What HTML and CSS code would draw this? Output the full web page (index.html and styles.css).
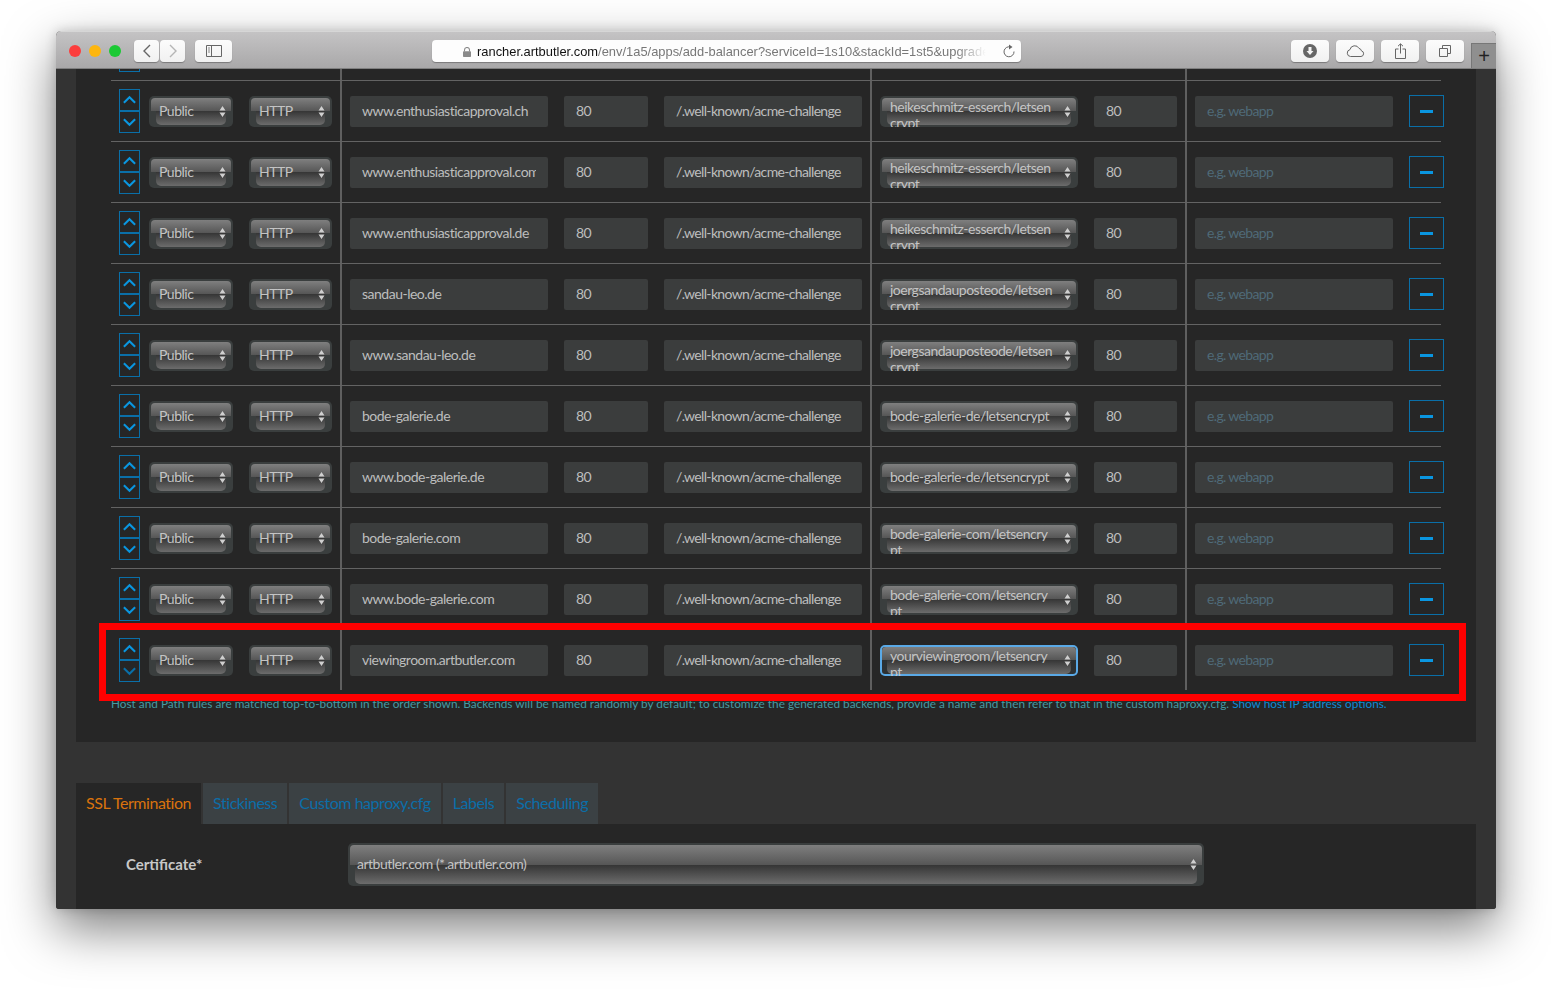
FILE: index.html
```html
<!DOCTYPE html>
<html lang="en">
<head>
    <meta charset="UTF-8">
    <title>Add Balancer</title>
    <link rel="stylesheet" href="styles.css">
</head>
<body>
    <svg class="defs" width="0" height="0">
        <symbol id="i-up" viewBox="0 0 16 10"><path d="M2 8 L8 2 L14 8" fill="none" stroke="currentColor" stroke-width="2.2"/></symbol>
        <symbol id="i-down" viewBox="0 0 16 10"><path d="M2 2 L8 8 L14 2" fill="none" stroke="currentColor" stroke-width="2.2"/></symbol>
        <symbol id="i-sort" viewBox="0 0 7 11"><path d="M3.5 0 L6.5 4.4 H0.5 Z M3.5 11 L0.5 6.6 H6.5 Z" fill="currentColor"/></symbol>
    </svg>

    <div class="window">
        <header class="toolbar">
            <div class="lights">
                <span class="light red"></span>
                <span class="light yellow"></span>
                <span class="light green"></span>
            </div>
            <div class="nav-group">
                <button class="tb-btn nav-btn"><svg width="10" height="16" viewBox="0 0 10 16"><path d="M8 2 L2 8 L8 14" fill="none" stroke="#666" stroke-width="1.4"/></svg></button>
                <button class="tb-btn nav-btn"><svg width="10" height="16" viewBox="0 0 10 16"><path d="M2 2 L8 8 L2 14" fill="none" stroke="#b5b5b5" stroke-width="1.4"/></svg></button>
            </div>
            <button class="tb-btn side-btn"><svg width="16" height="12" viewBox="0 0 16 12"><path d="M0.5 0.5 H15.5 V11.5 H0.5 Z M5.5 0.5 V11.5" fill="none" stroke="#666"/><path d="M2 3 H4 M2 5 H4 M2 7 H4" stroke="#888"/></svg></button>
            <div class="urlbar">
                <svg class="lock" width="8" height="10" viewBox="0 0 8 10"><path d="M1.5 4.5 V3 a2.5 2.5 0 0 1 5 0 V4.5" fill="none" stroke="#8a8a8a" stroke-width="1.1"/><rect x="0" y="4.2" width="8" height="5.8" rx="0.8" fill="#8a8a8a"/></svg>
                <span class="url"><b>rancher.artbutler.com</b>/env/1a5/apps/add-balancer?serviceId=1s10&amp;stackId=1st5&amp;upgrade</span>
                <svg class="reload" width="14" height="15" viewBox="0 0 14 15"><path d="M8.5 3 A5 5 0 1 0 12 7.5" fill="none" stroke="#666" stroke-width="1"/><path d="M7 0.5 L10.5 3 L7 5.5 Z" fill="#666"/></svg>
            </div>
            <div class="tb-right">
                <button class="tb-btn"><svg width="14" height="14" viewBox="0 0 14 14"><circle cx="7" cy="7" r="7" fill="#666"/><path d="M5.5 3 H8.5 V7 H10.5 L7 11 L3.5 7 H5.5 Z" fill="#f4f4f4"/></svg></button>
                <button class="tb-btn"><svg width="19" height="12" viewBox="0 0 19 12"><path d="M4.5 11.5 a3.5 3.5 0 0 1 -0.5 -6.9 a4.8 4.8 0 0 1 9 -1.2 a3 3 0 0 1 2.4 2.4 a2.9 2.9 0 0 1 -0.4 5.7 Z" fill="none" stroke="#666"/></svg></button>
                <button class="tb-btn"><svg width="11" height="16" viewBox="0 0 11 16"><path d="M3.5 6 H0.5 V15.5 H10.5 V6 H7.5 M5.5 10.5 V1 M3 3.2 L5.5 0.8 L8 3.2" fill="none" stroke="#666"/></svg></button>
                <button class="tb-btn"><svg width="12" height="12" viewBox="0 0 12 12"><path d="M3.5 3 V0.5 H11.5 V8.5 H8.5 M0.5 3.5 H8.5 V11.5 H0.5 Z" fill="none" stroke="#666"/></svg></button>
            </div>
            <div class="new-tab">+</div>
        </header>

        <main class="page">
            <section class="rules-panel">
                <div class="rules">
                    <div class="row">
                        <div class="cell cell-a">
                            <div class="updown"><button class="arrow"><svg><use href="#i-up"/></svg></button><button class="arrow"><svg><use href="#i-down"/></svg></button></div>
                            <div class="sel sel-access"><span>Public</span><svg class="sort"><use href="#i-sort"/></svg></div>
                            <div class="sel sel-proto"><span>HTTP</span><svg class="sort"><use href="#i-sort"/></svg></div>
                        </div>
                        <div class="cell cell-b">
                            <input class="field field-wide" value="enthusiasticapproval.ch">
                            <input class="field field-port" value="80">
                            <input class="field field-wide" value="/.well-known/acme-challenge">
                        </div>
                        <div class="cell cell-c">
                            <div class="sel sel-target two-line"><span>heikeschmitz-esserch/letsencrypt</span><svg class="sort"><use href="#i-sort"/></svg></div>
                            <input class="field field-port narrow" value="80">
                        </div>
                        <div class="cell cell-d">
                            <input class="field field-wide" placeholder="e.g. webapp">
                            <button class="remove"></button>
                        </div>
                    </div>

                    <div class="row">
                        <div class="cell cell-a">
                            <div class="updown"><button class="arrow"><svg><use href="#i-up"/></svg></button><button class="arrow"><svg><use href="#i-down"/></svg></button></div>
                            <div class="sel sel-access"><span>Public</span><svg class="sort"><use href="#i-sort"/></svg></div>
                            <div class="sel sel-proto"><span>HTTP</span><svg class="sort"><use href="#i-sort"/></svg></div>
                        </div>
                        <div class="cell cell-b">
                            <input class="field field-wide" value="www.enthusiasticapproval.ch">
                            <input class="field field-port" value="80">
                            <input class="field field-wide" value="/.well-known/acme-challenge">
                        </div>
                        <div class="cell cell-c">
                            <div class="sel sel-target two-line"><span>heikeschmitz-esserch/letsencrypt</span><svg class="sort"><use href="#i-sort"/></svg></div>
                            <input class="field field-port narrow" value="80">
                        </div>
                        <div class="cell cell-d">
                            <input class="field field-wide" placeholder="e.g. webapp">
                            <button class="remove"></button>
                        </div>
                    </div>

                    <div class="row">
                        <div class="cell cell-a">
                            <div class="updown"><button class="arrow"><svg><use href="#i-up"/></svg></button><button class="arrow"><svg><use href="#i-down"/></svg></button></div>
                            <div class="sel sel-access"><span>Public</span><svg class="sort"><use href="#i-sort"/></svg></div>
                            <div class="sel sel-proto"><span>HTTP</span><svg class="sort"><use href="#i-sort"/></svg></div>
                        </div>
                        <div class="cell cell-b">
                            <input class="field field-wide" value="www.enthusiasticapproval.com">
                            <input class="field field-port" value="80">
                            <input class="field field-wide" value="/.well-known/acme-challenge">
                        </div>
                        <div class="cell cell-c">
                            <div class="sel sel-target two-line"><span>heikeschmitz-esserch/letsencrypt</span><svg class="sort"><use href="#i-sort"/></svg></div>
                            <input class="field field-port narrow" value="80">
                        </div>
                        <div class="cell cell-d">
                            <input class="field field-wide" placeholder="e.g. webapp">
                            <button class="remove"></button>
                        </div>
                    </div>

                    <div class="row">
                        <div class="cell cell-a">
                            <div class="updown"><button class="arrow"><svg><use href="#i-up"/></svg></button><button class="arrow"><svg><use href="#i-down"/></svg></button></div>
                            <div class="sel sel-access"><span>Public</span><svg class="sort"><use href="#i-sort"/></svg></div>
                            <div class="sel sel-proto"><span>HTTP</span><svg class="sort"><use href="#i-sort"/></svg></div>
                        </div>
                        <div class="cell cell-b">
                            <input class="field field-wide" value="www.enthusiasticapproval.de">
                            <input class="field field-port" value="80">
                            <input class="field field-wide" value="/.well-known/acme-challenge">
                        </div>
                        <div class="cell cell-c">
                            <div class="sel sel-target two-line"><span>heikeschmitz-esserch/letsencrypt</span><svg class="sort"><use href="#i-sort"/></svg></div>
                            <input class="field field-port narrow" value="80">
                        </div>
                        <div class="cell cell-d">
                            <input class="field field-wide" placeholder="e.g. webapp">
                            <button class="remove"></button>
                        </div>
                    </div>

                    <div class="row">
                        <div class="cell cell-a">
                            <div class="updown"><button class="arrow"><svg><use href="#i-up"/></svg></button><button class="arrow"><svg><use href="#i-down"/></svg></button></div>
                            <div class="sel sel-access"><span>Public</span><svg class="sort"><use href="#i-sort"/></svg></div>
                            <div class="sel sel-proto"><span>HTTP</span><svg class="sort"><use href="#i-sort"/></svg></div>
                        </div>
                        <div class="cell cell-b">
                            <input class="field field-wide" value="sandau-leo.de">
                            <input class="field field-port" value="80">
                            <input class="field field-wide" value="/.well-known/acme-challenge">
                        </div>
                        <div class="cell cell-c">
                            <div class="sel sel-target two-line"><span>joergsandauposteode/letsencrypt</span><svg class="sort"><use href="#i-sort"/></svg></div>
                            <input class="field field-port narrow" value="80">
                        </div>
                        <div class="cell cell-d">
                            <input class="field field-wide" placeholder="e.g. webapp">
                            <button class="remove"></button>
                        </div>
                    </div>

                    <div class="row">
                        <div class="cell cell-a">
                            <div class="updown"><button class="arrow"><svg><use href="#i-up"/></svg></button><button class="arrow"><svg><use href="#i-down"/></svg></button></div>
                            <div class="sel sel-access"><span>Public</span><svg class="sort"><use href="#i-sort"/></svg></div>
                            <div class="sel sel-proto"><span>HTTP</span><svg class="sort"><use href="#i-sort"/></svg></div>
                        </div>
                        <div class="cell cell-b">
                            <input class="field field-wide" value="www.sandau-leo.de">
                            <input class="field field-port" value="80">
                            <input class="field field-wide" value="/.well-known/acme-challenge">
                        </div>
                        <div class="cell cell-c">
                            <div class="sel sel-target two-line"><span>joergsandauposteode/letsencrypt</span><svg class="sort"><use href="#i-sort"/></svg></div>
                            <input class="field field-port narrow" value="80">
                        </div>
                        <div class="cell cell-d">
                            <input class="field field-wide" placeholder="e.g. webapp">
                            <button class="remove"></button>
                        </div>
                    </div>

                    <div class="row">
                        <div class="cell cell-a">
                            <div class="updown"><button class="arrow"><svg><use href="#i-up"/></svg></button><button class="arrow"><svg><use href="#i-down"/></svg></button></div>
                            <div class="sel sel-access"><span>Public</span><svg class="sort"><use href="#i-sort"/></svg></div>
                            <div class="sel sel-proto"><span>HTTP</span><svg class="sort"><use href="#i-sort"/></svg></div>
                        </div>
                        <div class="cell cell-b">
                            <input class="field field-wide" value="bode-galerie.de">
                            <input class="field field-port" value="80">
                            <input class="field field-wide" value="/.well-known/acme-challenge">
                        </div>
                        <div class="cell cell-c">
                            <div class="sel sel-target"><span>bode-galerie-de/letsencrypt</span><svg class="sort"><use href="#i-sort"/></svg></div>
                            <input class="field field-port narrow" value="80">
                        </div>
                        <div class="cell cell-d">
                            <input class="field field-wide" placeholder="e.g. webapp">
                            <button class="remove"></button>
                        </div>
                    </div>

                    <div class="row">
                        <div class="cell cell-a">
                            <div class="updown"><button class="arrow"><svg><use href="#i-up"/></svg></button><button class="arrow"><svg><use href="#i-down"/></svg></button></div>
                            <div class="sel sel-access"><span>Public</span><svg class="sort"><use href="#i-sort"/></svg></div>
                            <div class="sel sel-proto"><span>HTTP</span><svg class="sort"><use href="#i-sort"/></svg></div>
                        </div>
                        <div class="cell cell-b">
                            <input class="field field-wide" value="www.bode-galerie.de">
                            <input class="field field-port" value="80">
                            <input class="field field-wide" value="/.well-known/acme-challenge">
                        </div>
                        <div class="cell cell-c">
                            <div class="sel sel-target"><span>bode-galerie-de/letsencrypt</span><svg class="sort"><use href="#i-sort"/></svg></div>
                            <input class="field field-port narrow" value="80">
                        </div>
                        <div class="cell cell-d">
                            <input class="field field-wide" placeholder="e.g. webapp">
                            <button class="remove"></button>
                        </div>
                    </div>

                    <div class="row">
                        <div class="cell cell-a">
                            <div class="updown"><button class="arrow"><svg><use href="#i-up"/></svg></button><button class="arrow"><svg><use href="#i-down"/></svg></button></div>
                            <div class="sel sel-access"><span>Public</span><svg class="sort"><use href="#i-sort"/></svg></div>
                            <div class="sel sel-proto"><span>HTTP</span><svg class="sort"><use href="#i-sort"/></svg></div>
                        </div>
                        <div class="cell cell-b">
                            <input class="field field-wide" value="bode-galerie.com">
                            <input class="field field-port" value="80">
                            <input class="field field-wide" value="/.well-known/acme-challenge">
                        </div>
                        <div class="cell cell-c">
                            <div class="sel sel-target two-line"><span>bode-galerie-com/letsencrypt</span><svg class="sort"><use href="#i-sort"/></svg></div>
                            <input class="field field-port narrow" value="80">
                        </div>
                        <div class="cell cell-d">
                            <input class="field field-wide" placeholder="e.g. webapp">
                            <button class="remove"></button>
                        </div>
                    </div>

                    <div class="row">
                        <div class="cell cell-a">
                            <div class="updown"><button class="arrow"><svg><use href="#i-up"/></svg></button><button class="arrow"><svg><use href="#i-down"/></svg></button></div>
                            <div class="sel sel-access"><span>Public</span><svg class="sort"><use href="#i-sort"/></svg></div>
                            <div class="sel sel-proto"><span>HTTP</span><svg class="sort"><use href="#i-sort"/></svg></div>
                        </div>
                        <div class="cell cell-b">
                            <input class="field field-wide" value="www.bode-galerie.com">
                            <input class="field field-port" value="80">
                            <input class="field field-wide" value="/.well-known/acme-challenge">
                        </div>
                        <div class="cell cell-c">
                            <div class="sel sel-target two-line"><span>bode-galerie-com/letsencrypt</span><svg class="sort"><use href="#i-sort"/></svg></div>
                            <input class="field field-port narrow" value="80">
                        </div>
                        <div class="cell cell-d">
                            <input class="field field-wide" placeholder="e.g. webapp">
                            <button class="remove"></button>
                        </div>
                    </div>

                    <div class="row">
                        <div class="cell cell-a">
                            <div class="updown"><button class="arrow"><svg><use href="#i-up"/></svg></button><button class="arrow dim"><svg><use href="#i-down"/></svg></button></div>
                            <div class="sel sel-access"><span>Public</span><svg class="sort"><use href="#i-sort"/></svg></div>
                            <div class="sel sel-proto"><span>HTTP</span><svg class="sort"><use href="#i-sort"/></svg></div>
                        </div>
                        <div class="cell cell-b">
                            <input class="field field-wide" value="viewingroom.artbutler.com">
                            <input class="field field-port" value="80">
                            <input class="field field-wide" value="/.well-known/acme-challenge">
                        </div>
                        <div class="cell cell-c">
                            <div class="sel sel-target two-line focused"><span>yourviewingroom/letsencrypt</span><svg class="sort"><use href="#i-sort"/></svg></div>
                            <input class="field field-port narrow" value="80">
                        </div>
                        <div class="cell cell-d">
                            <input class="field field-wide" placeholder="e.g. webapp">
                            <button class="remove"></button>
                        </div>
                    </div>
                </div>

                <p class="help">Host and Path rules are matched top-to-bottom in the order shown. Backends will be named randomly by default; to customize the generated backends, provide a name and then refer to that in the custom haproxy.cfg. <a href="#">Show host IP address options.</a></p>
            </section>

            <nav class="tabs">
                <a class="tab active" href="#">SSL Termination</a>
                <a class="tab" href="#">Stickiness</a>
                <a class="tab" href="#">Custom haproxy.cfg</a>
                <a class="tab" href="#">Labels</a>
                <a class="tab" href="#">Scheduling</a>
            </nav>
            <section class="tab-panel">
                <label class="cert-label">Certificate*</label>
                <div class="sel sel-cert"><span>artbutler.com (*.artbutler.com)</span><svg class="sort"><use href="#i-sort"/></svg></div>
            </section>
        </main>

        <div class="highlight"></div>
    </div>
</body>
</html>
```

FILE: styles.css
```css
* {
    box-sizing: border-box;
}

html, body {
    height: 100%;
}

body {
    margin: 0;
    padding: 31px 56px 0;
    background: #fff;
    overflow: hidden;
    font-family: 'Lato', sans-serif;
    color: #bdbdbd;
}

body::before {
    content: "";
    position: absolute;
    left: 56px;
    top: 31px;
    width: 1440px;
    height: 878px;
    border-radius: 5px;
    box-shadow: 0 20px 50px rgba(0, 0, 0, 0.5), 0 0 12px rgba(0, 0, 0, 0.18);
}

.defs {
    display: block;
    height: 0;
}

.window {
    position: relative;
    height: 878px;
    width: 1440px;
    border-radius: 5px 5px 3px 3px;
    overflow: hidden;
    background: #333;
}

/* browser chrome */
.toolbar {
    display: flex;
    align-items: center;
    height: 38px;
    padding-top: 2px;
    background: linear-gradient(#c4c3c4, #a9a8a9);
    border-bottom: 1px solid #7f7f7f;
    border-top: 1px solid #d6d6d6;
}

.lights {
    display: flex;
    gap: 8px;
    margin-left: 13px;
    width: 65px;
}

.light {
    width: 12px;
    height: 12px;
    border-radius: 50%;
}

.light.red { background: #fc3d3d; }
.light.yellow { background: #fdb60f; }
.light.green { background: #1bc934; }

.tb-btn {
    display: flex;
    align-items: center;
    justify-content: center;
    width: 38px;
    height: 22px;
    padding: 0;
    background: linear-gradient(#fcfcfc, #f1f1f1);
    border: none;
    border-radius: 4px;
    box-shadow: 0 1px 1px rgba(0, 0, 0, 0.3);
}

.nav-group {
    display: flex;
    gap: 1px;
}

.nav-btn {
    width: 25px;
}

.side-btn {
    margin-left: 10px;
    width: 37px;
}

.urlbar {
    display: flex;
    align-items: center;
    width: 589px;
    height: 22px;
    margin-left: 200px;
    padding: 1px 0 0 31px;
    background: #fdfdfd;
    border-radius: 4px;
    box-shadow: 0 1px 1px rgba(0, 0, 0, 0.3);
    font-family: 'Liberation Sans', sans-serif;
    font-size: 12.9px;
    color: #777;
    white-space: nowrap;
}

.lock {
    flex: none;
    margin-right: 6px;
}

.url {
    width: 509px;
    overflow: hidden;
    -webkit-mask-image: linear-gradient(to right, #000 94%, transparent);
    mask-image: linear-gradient(to right, #000 94%, transparent);
}

.url b {
    font-weight: 400;
    color: #111;
}

.reload {
    flex: none;
    margin-left: 16px;
}

.tb-right {
    display: flex;
    gap: 7px;
    margin-left: 270px;
}

.new-tab {
    width: 25px;
    height: 25px;
    margin-left: 7px;
    align-self: flex-end;
    background: #8f8f8f;
    border-left: 1px solid #777;
    border-top: 1px solid #777;
    color: #222;
    font-family: 'Liberation Sans', sans-serif;
    font-size: 20px;
    font-weight: 300;
    line-height: 25px;
    text-align: center;
}

/* page */
.page {
    height: 840px;
    padding: 0 20px;
    background: #333;
    overflow: hidden;
}

.rules-panel {
    height: 673px;
    padding-left: 35px;
    background: #262626;
    overflow: hidden;
}

.rules {
    margin-top: -50px;
}

.row {
    display: flex;
    width: 1330px;
    height: 61px;
    border-top: 1px solid #636363;
}

.cell {
    display: flex;
    flex: none;
    align-items: center;
    gap: 16px;
    padding-left: 8px;
    border-left: 2px solid #5f5f5f;
}

.cell-a {
    width: 229px;
    border-left: none;
}

.cell-b { width: 530px; }
.cell-c { width: 315px; }
.cell-d { width: 256px; }

.updown {
    display: flex;
    flex: none;
    flex-direction: column;
    width: 21px;
    margin-right: -7px;
}

.arrow {
    display: flex;
    align-items: center;
    justify-content: center;
    width: 21px;
    height: 22px;
    padding: 0;
    background: none;
    border: 1px solid #0a6fa8;
    color: #0a96e0;
}

.arrow svg {
    width: 15px;
    height: 10px;
}

.arrow.dim {
    color: #0a6fa8;
}

.field {
    height: 31px;
    padding: 0 12px 2px;
    background: #3b3d3d;
    border: none;
    border-radius: 2px;
    outline: none;
    color: #bdbdbd;
    font-family: 'Lato', sans-serif;
    font-size: 14px;
    letter-spacing: -0.5px;
}

.cell-b .field-wide:last-child {
    letter-spacing: -0.65px;
}

.field::placeholder {
    color: #4f6a78;
    letter-spacing: -0.65px;
    opacity: 1;
}

.field-wide { width: 198px; }
.field-port { width: 84px; }
.field-port.narrow { width: 83px; }

.remove {
    position: relative;
    flex: none;
    width: 35px;
    height: 32px;
    padding: 0;
    background: none;
    border: 1px solid #0a6fa8;
}

.remove::after {
    content: "";
    position: absolute;
    left: 10px;
    top: 14px;
    width: 13px;
    height: 3px;
    background: #0a96e0;
}

/* glossy native selects */
.sel {
    position: relative;
    display: flex;
    flex: none;
    align-items: center;
    height: 31px;
    padding: 0 24px 1px 10px;
    background: #3a3e3e;
    border-radius: 5px;
    overflow: hidden;
    color: #c4c4c4;
    font-size: 14px;
    line-height: 16px;
    letter-spacing: -0.5px;
}

.sel::before {
    content: "";
    position: absolute;
    left: 2px;
    right: 2px;
    top: 2px;
    height: 13px;
    background: linear-gradient(#7f7f7f, #565656);
    border-radius: 4px 4px 0 0;
}

.sel::after {
    content: "";
    position: absolute;
    left: 7px;
    right: 7px;
    top: 15px;
    bottom: 2px;
    background: linear-gradient(#353535, #6c6c6c);
    border-radius: 0 0 5px 5px;
}

.sel span {
    position: relative;
    z-index: 1;
    word-break: break-all;
}

.sort {
    position: absolute;
    z-index: 1;
    right: 7px;
    top: 10px;
    width: 7px;
    height: 11px;
    color: #cfcfcf;
}

.sel-access { width: 84px; }
.sel-proto { width: 83px; }
.sel-target { width: 198px; }

.two-line {
    align-items: flex-start;
    padding-top: 3px;
}

.focused {
    background: #2d3133;
    box-shadow: inset 0 0 0 2px #5aa9e6;
}

.help {
    margin: 5px 0 0;
    font-size: 11.8px;
    line-height: 17px;
    color: #459aa3;
    white-space: nowrap;
}

.help a {
    color: #0d8ad6;
    text-decoration: none;
}

/* tabs */
.tabs {
    display: flex;
    gap: 2px;
    margin-top: 41px;
}

.tab {
    height: 41px;
    padding: 0 10px;
    background: #3b4144;
    color: #0b6ea8;
    font-size: 16px;
    letter-spacing: -0.45px;
    line-height: 39px;
    text-decoration: none;
}

.tab.active {
    background: #262626;
    color: #d9730d;
}

.tab-panel {
    display: flex;
    align-items: flex-start;
    height: 90px;
    padding: 19px 0 0 50px;
    background: #262626;
}

.cert-label {
    width: 222px;
    padding-top: 12px;
    font-size: 15px;
    font-weight: 700;
    color: #c8c8c8;
}

.sel-cert {
    width: 856px;
    height: 43px;
    padding-left: 9px;
}

.sel-cert::before {
    height: 20px;
}

.sel-cert::after {
    top: 22px;
}

.sel-cert .sort {
    top: 16px;
}

/* annotation drawn over the screenshot */
.highlight {
    position: absolute;
    left: 43px;
    top: 592px;
    width: 1367px;
    height: 78px;
    border: 7px solid #f00;
}
```
